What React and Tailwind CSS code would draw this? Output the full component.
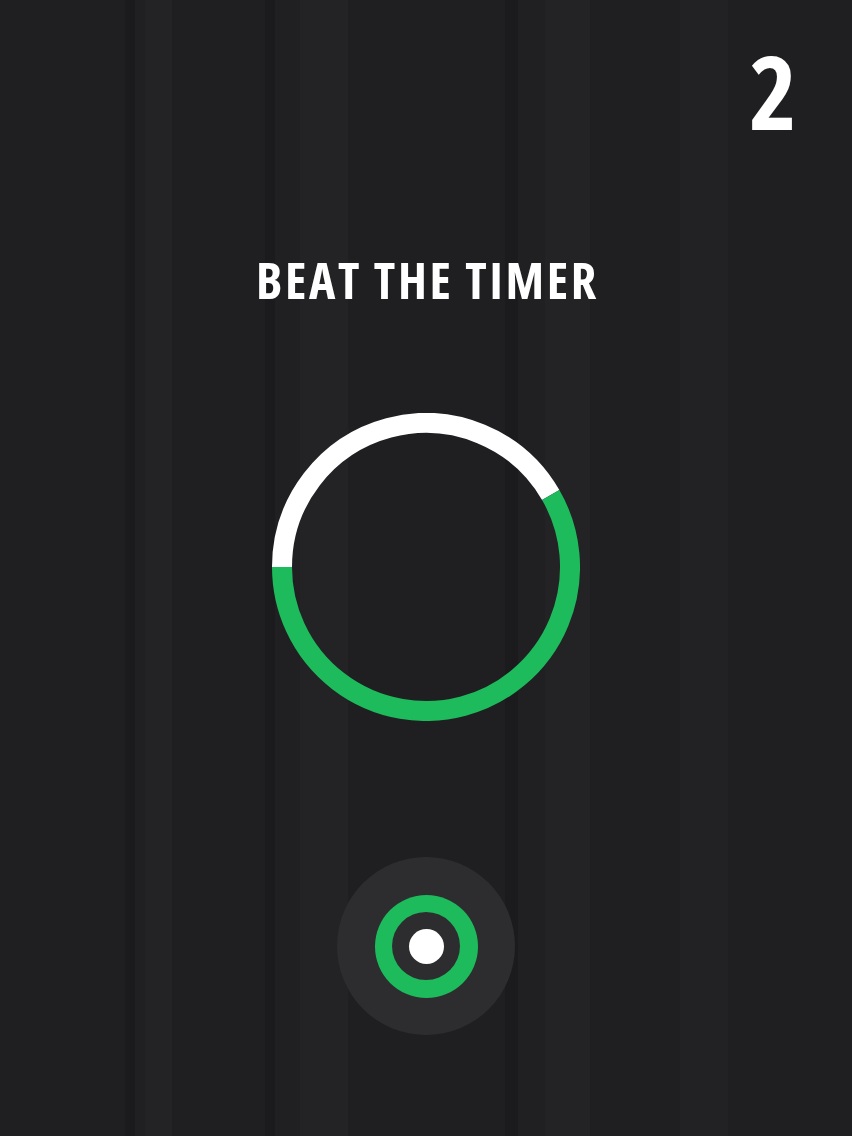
import React from 'react';

// background bands: [width, colour]
const BANDS = [
  [125, '#1f1e21'],
  [10, '#1b1a1d'],
  [10, '#201f22'],
  [27, '#232225'],
  [93, '#1f1e21'],
  [10, '#1b1a1d'],
  [25, '#201f22'],
  [48, '#232225'],
  [157, '#1f1e21'],
  [13, '#1b1a1d'],
  [27, '#201f22'],
  [45, '#232225'],
  [90, '#1f1e21'],
  [48, '#222124'],
  [124, '#1f1e21'],
];

const TimerRing = () => (
  <svg width="308" height="308" viewBox="0 0 308 308">
    <path d="M 10 154 A 144 144 0 0 1 278.71 82" fill="none" stroke="#ffffff" strokeWidth="20" />
    <path d="M 10 154 A 144 144 0 1 0 278.71 82" fill="none" stroke="#1dbb5c" strokeWidth="20" />
  </svg>
);

const App = () => {
  return (
    <div className="relative w-full h-[1136px] overflow-hidden bg-[#1f1e21] text-white" style={{ fontFamily: '"Open Sans", "DejaVu Sans", sans-serif' }}>
      <div className="absolute inset-0 flex pointer-events-none">
        {BANDS.map(([w, c], i) => (
          <div key={i} className="h-full shrink-0" style={{ width: w, backgroundColor: c }} />
        ))}
      </div>

      <div className="relative flex flex-col items-center">
        <div className="w-full flex justify-end pr-[55px] pt-[40px]">
          <span className="text-[102px] font-bold leading-none font-stretch-condensed">2</span>
        </div>

        <h1 className="mt-[113px] pl-[3px] text-[50px] font-bold leading-none font-stretch-condensed tracking-[2.7px]">BEAT THE TIMER</h1>

        <div className="mt-[108px]">
          <TimerRing />
        </div>

        <div className="mt-[136px] w-[178px] h-[178px] rounded-full bg-[#2d2d2f] flex items-center justify-center">
          <div className="w-[103px] h-[103px] rounded-full bg-[#1dbb5c] flex items-center justify-center">
            <div className="w-[68px] h-[68px] rounded-full bg-[#2d2d2f] flex items-center justify-center">
              <div className="w-[35px] h-[35px] rounded-full bg-white" />
            </div>
          </div>
        </div>
      </div>
    </div>
  );
};

export default App;
